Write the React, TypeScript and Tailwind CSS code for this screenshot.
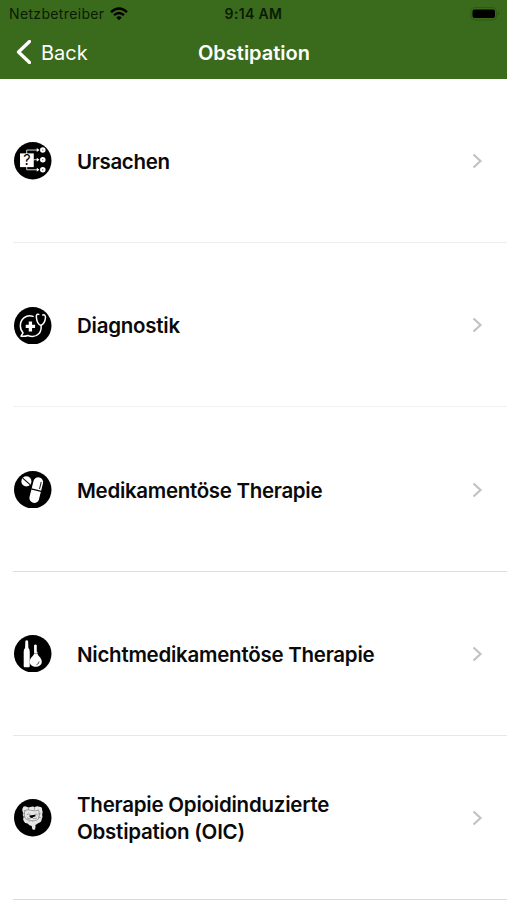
import type { ReactNode } from "react";

function CausesIcon() {
  return (
    <>
      <rect x="18" y="34" width="41" height="41" fill="#fff" />
      <text x="38.500" y="70" textAnchor="middle" fontSize="43" fill="#000" className="font-['Inter',sans-serif]">
        ?
      </text>
      <g stroke="#fff" strokeWidth="2.500" fill="none">
        <path d="M38 36V24H70M58 53H70M38 74V83H70" />
        <circle cx="86" cy="24" r="5" strokeWidth="6.500" />
        <circle cx="86" cy="53" r="5" strokeWidth="6.500" />
        <circle cx="86" cy="83" r="5" strokeWidth="6.500" />
      </g>
      <path d="M68 18l8 6-8 6zM68 47l8 6-8 6zM68 77l8 6-8 6z" fill="#fff" />
    </>
  );
}

function DiagnosticsIcon() {
  return (
    <>
      <g stroke="#fff" strokeWidth="4.500" fill="none" strokeLinecap="round" strokeLinejoin="round">
        <path d="M57 28C37 21 19 36 19 56c0 9 3 16 8 21l-6 10c8 1 15 0 20-2 12 5 25 3 33-5 6-6 8-14 7-25" />
        <path d="M74 22c-7-2-8 4-7 10 1 10 5 20 13 23 8-3 13-13 14-23 0-6-2-10-8-8" />
      </g>
      <path d="M44 43h10v10h9v10h-9v10H44V63h-9V53h9z" fill="#fff" />
    </>
  );
}

function PillsIcon() {
  return (
    <>
      <circle cx="37" cy="31" r="15" fill="#fff" />
      <path d="M26 21l22 20" stroke="#000" strokeWidth="3" />
      <g transform="rotate(14 66 57)">
        <rect x="52" y="18" width="29" height="78" rx="14" fill="#fff" />
        <path d="M51 57h31" stroke="#000" strokeWidth="3.500" />
        <path d="M75 31v19" stroke="#000" strokeWidth="2.500" strokeLinecap="round" />
      </g>
    </>
  );
}

function RemediesIcon() {
  return (
    <>
      <path d="M34 17q4-3 8 0l1 22q4 4 4 10v44q0 3-3 3H32q-3 0-3-3V49q0-6 4-10z" fill="#fff" />
      <path d="M60 30q4-3 8 0v20h2v7c3 7 13 12 13 23 0 20-36 20-36 0 0-11 10-16 13-23v-7z" fill="#fff" />
      <path d="M59 55h11" stroke="#000" strokeWidth="1.200" />
      <path d="M75 79q-1 8-8 10" stroke="#000" strokeWidth="2" fill="none" />
    </>
  );
}

function IntestineIcon() {
  return (
    <>
      <path
        d="M26 25q5-5 12-2 6 3 11 1 6-3 13 0 7-4 14-1 9 0 8 10 4 7 0 14 3 7-1 13-1 10-10 12-4 3-9 6 1 8-1 12-4 3-8 0-2-5-2-9-8-1-12-8-9 1-12-7-4-7 0-12-5-6-2-13-5-10 1-16z"
        fill="#e6e6e6"
      />
      <g stroke="#555" strokeWidth="1.500" fill="none" strokeLinecap="round">
        <path d="M31 35q12-6 21-1 10 4 22-1M32 36q-4 11 1 20 4 8 12 7M74 35q4 12 0 22-5 10-18 8" />
        <path d="M39 46q4-4 9 0M62 46q4-5 8 1M40 57q6 4 10 0M57 58q6 4 11-1M45 66q6-5 11 0" />
        <path d="M26 42l5 2M27 56l5-2M79 43l-5 2M79 56l-5-2M43 25v6M61 25v6" />
      </g>
      <path d="M46 49l18-2v5l-5 1q-3 4-7 4l-5-3z" fill="#000" />
    </>
  );
}

const items: { label: string; icon: ReactNode; className: string; line: string }[] = [
  { label: "Ursachen", icon: <CausesIcon />, className: "tracking-[-0.350px]", line: "border-[#ededed]" },
  { label: "Diagnostik", icon: <DiagnosticsIcon />, className: "tracking-[-0.250px]", line: "border-[#f1f1f1]" },
  { label: "Medikamentöse Therapie", icon: <PillsIcon />, className: "tracking-[-0.310px]", line: "border-[#dedede]" },
  { label: "Nichtmedikamentöse Therapie", icon: <RemediesIcon />, className: "tracking-[-0.255px]", line: "border-[#e7e7e7]" },
  { label: "Therapie Opioidinduzierte Obstipation (OIC)", icon: <IntestineIcon />, className: "tracking-[-0.230px]", line: "border-[#d8d8d8]" },
];

function StatusBar() {
  return (
    <div className="grid h-[27px] grid-cols-3 items-center pl-[8px] pr-[8px] text-[#0b1b03]">
      <div className="flex items-center gap-[6px] pl-px">
        <span className="text-[14px] tracking-[0.350px]">Netzbetreiber</span>
        <svg className="h-[14px] w-[18px]" viewBox="0 0 18 14" fill="none" stroke="#000" strokeWidth="2.400">
          <path d="M1 5.200Q9-2.200 17 5.200M4 8.200q5-4.400 10 0" />
          <path d="M6.300 10.500q2.700-2.300 5.400 0L9 13.300z" fill="#000" stroke="none" />
        </svg>
      </div>
      <span className="text-center text-[14px] font-semibold tracking-[0.350px]">9:14 AM</span>
      <svg className="h-[14px] w-[30px] translate-x-px justify-self-end" viewBox="0 0 30 14">
        <rect x="1" y="0.500" width="25.500" height="12.500" rx="4" fill="none" stroke="#2f5a14" />
        <rect x="2.500" y="2.500" width="22.500" height="8.500" rx="2" fill="#000" />
        <path d="M28 5q2 1.700 0 3.500z" fill="#28500f" />
      </svg>
    </div>
  );
}

export default function App() {
  return (
    <div className="flex h-[900px] w-[507px] flex-col overflow-hidden bg-white font-['Inter',sans-serif]">
      <header className="h-[79px] shrink-0 bg-[#3a6a1c]">
        <StatusBar />
        <div className="grid h-[50px] grid-cols-3 items-center text-white">
          <button className="flex items-center gap-[10px] pl-[16px] text-[20px]">
            <svg className="h-[24px] w-[15px]" viewBox="0 0 15 24" fill="none" stroke="#fff" strokeWidth="3.300">
              <path d="M13.500 1.500L2.500 12l11 10.500" strokeLinecap="round" strokeLinejoin="round" />
            </svg>
            <span className="pt-px">Back</span>
          </button>
          <h1 className="pt-px pl-px text-center text-[20px] font-semibold">Obstipation</h1>
        </div>
      </header>

      <ul className="flex flex-1 flex-col">
        {items.map((item) => (
          <li key={item.label} className="flex flex-1 pl-[13px]">
            <div className={`flex flex-1 items-center border-b pt-px ${item.line}`}>
              <svg className="ml-[1px] size-[37.500px] shrink-0" viewBox="0 0 112 112">
                <circle cx="56" cy="56" r="56" fill="#000" />
                {item.icon}
              </svg>
              <span className={`ml-[25.500px] w-[310px] pt-px text-[20.500px] leading-[27px] font-semibold text-[#0a0a0a] ${item.className}`}>
                {item.label}
              </span>
              <svg className="mr-[24px] ml-auto h-[16px] w-[11px]" viewBox="0 0 11 16" fill="none" stroke="#c2c2c4" strokeWidth="2.200">
                <path d="M1.500 1.500L8.500 8l-7 6.500" />
              </svg>
            </div>
          </li>
        ))}
      </ul>
    </div>
  );
}
